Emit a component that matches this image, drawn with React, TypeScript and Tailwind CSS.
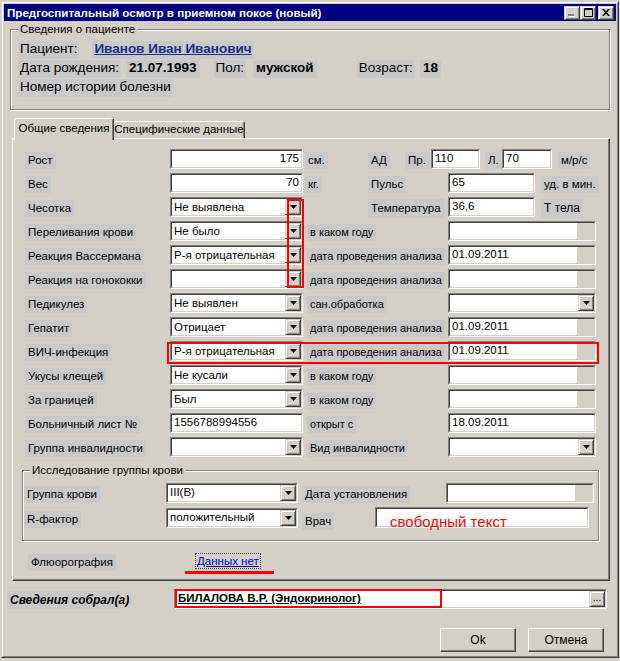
import React from "react";

const LBL =
  "inline-flex items-center h-[17px] px-[3px] bg-[#c9c9c9] leading-none whitespace-nowrap text-black";

function Lbl({
  children,
  className = "",
  size = "text-[11.5px]",
}: {
  children?: React.ReactNode;
  className?: string;
  size?: string;
}) {
  return <span className={`${LBL} ${size} ${className}`}>{children}</span>;
}

function Sunken({
  className = "",
  inner = "bg-white",
  children,
}: {
  className?: string;
  inner?: string;
  children?: React.ReactNode;
}) {
  return (
    <div className={`border border-t-[#808080] border-l-[#808080] border-b-white border-r-white ${className}`}>
      <div
        className={`h-full flex items-center border border-t-[#404040] border-l-[#404040] border-b-[#d4d0c8] border-r-[#d4d0c8] ${inner}`}
      >
        {children}
      </div>
    </div>
  );
}

function Field({
  w,
  value = "",
  right = false,
  tail = false,
}: {
  w: string;
  value?: string;
  right?: boolean;
  tail?: boolean;
}) {
  return (
    <Sunken className={`${w} h-[20px]`}>
      <span className={`flex-1 px-[2px] text-[11.5px] leading-none whitespace-nowrap ${right ? "text-right" : ""}`}>
        {value}
      </span>
      {tail && <span className="w-[17px] h-full bg-[#d4d0c8]" />}
    </Sunken>
  );
}

function RaisedBox({ className = "", children }: { className?: string; children?: React.ReactNode }) {
  return (
    <span
      className={`flex items-center justify-center bg-[#d4d0c8] border border-t-[#d4d0c8] border-l-[#d4d0c8] border-r-[#404040] border-b-[#404040] shadow-[inset_1px_1px_0_white,inset_-1px_-1px_0_#808080] ${className}`}
    >
      {children}
    </span>
  );
}

function DropBtn() {
  return (
    <RaisedBox className="w-[16px] h-[16px] shrink-0">
      <svg width="7" height="4" viewBox="0 0 7 4">
        <path d="M0 0h7L3.5 4z" fill="black" />
      </svg>
    </RaisedBox>
  );
}

function Combo({ w, value = "" }: { w: string; value?: string }) {
  return (
    <Sunken className={`${w} h-[20px]`}>
      <span className="flex-1 px-[2px] pt-[1px] text-[11.5px] leading-none whitespace-nowrap overflow-hidden">{value}</span>
      <DropBtn />
    </Sunken>
  );
}

function Row({ label, control, children }: { label: string; control: React.ReactNode; children?: React.ReactNode }) {
  return (
    <div className="flex items-center h-[24px]">
      <div className="w-[145px]">
        <Lbl>{label}</Lbl>
      </div>
      {control}
      {children}
    </div>
  );
}

function RightField({ label, value = "", tail = true, combo = false }: { label: string; value?: string; tail?: boolean; combo?: boolean }) {
  return (
    <>
      <div className="w-[145px] pl-[4px]">
        <Lbl size="text-[11px]">{label}</Lbl>
      </div>
      {combo ? <Combo w="w-[148px]" /> : <Field w="w-[148px]" value={value} tail={tail} />}
    </>
  );
}

function TitleBtn({ children, className = "" }: { children: React.ReactNode; className?: string }) {
  return <RaisedBox className={`w-[16px] h-[14px] ${className}`}>{children}</RaisedBox>;
}

export default function App() {
  return (
    <div className="relative w-[620px] h-[661px] bg-[#d4d0c8] p-[1px] font-['Liberation_Sans',Arial,sans-serif] text-black overflow-hidden">
      <div className="w-[618px] h-[657px] border border-t-[#d4d0c8] border-l-[#d4d0c8] border-r-[#404040] border-b-[#404040]">
        <div className="h-full border border-t-white border-l-white border-r-[#808080] border-b-[#808080] p-[1px] flex flex-col">
          {/* title bar */}
          <div className="h-[17px] bg-[#000080] flex items-center pl-[3px] pr-[2px]">
            <span className="flex-1 text-white font-bold text-[11.6px] leading-none whitespace-nowrap">
              Предгоспитальный осмотр в приемном покое (новый)
            </span>
            <TitleBtn>
              <svg width="10" height="8" viewBox="0 0 10 8">
                <rect x="1" y="5" width="6" height="2" fill="#808080" />
                <rect x="2" y="7" width="6" height="1" fill="white" />
              </svg>
            </TitleBtn>
            <TitleBtn>
              <svg width="9" height="9" viewBox="0 0 9 9">
                <path d="M0.5 0.5h8v8h-8z" fill="none" stroke="black" />
                <rect x="0" y="1" width="9" height="1" fill="black" />
              </svg>
            </TitleBtn>
            <TitleBtn className="ml-[2px]">
              <svg width="8" height="7" viewBox="0 0 8 7">
                <path d="M0 0h2l2 2.5L6 0h2L5 3.5 8 7H6L4 4.5 2 7H0l3-3.5z" fill="black" />
              </svg>
            </TitleBtn>
          </div>

          {/* patient info */}
          <fieldset className="mt-[1px] mx-[6px] h-[88px] border border-[#808080] shadow-[1px_1px_0_white,inset_1px_1px_0_white]">
            <legend className="ml-[7px] px-[2px] bg-[#d4d0c8] text-[11.5px] leading-[14px]">Сведения о пациенте</legend>
            <div className="pl-[7px] pt-[4px] text-[13.5px] flex flex-col">
              <div className="flex items-center h-[19px]">
                <span className="h-[18px] flex items-center px-[2px] bg-[#c9c9c9]">Пациент:</span>
                <span className="ml-[13px] h-[18px] flex items-center px-[2px] bg-[#c9c9c9] text-[#1c2a8c] font-bold underline">
                  Иванов Иван Иванович
                </span>
              </div>
              <div className="flex items-center h-[19px]">
                <span className="h-[18px] flex items-center px-[2px] bg-[#c9c9c9]">Дата рождения:</span>
                <span className="ml-[5px] h-[18px] flex items-center px-[3px] bg-[#c9c9c9] font-bold">21.07.1993</span>
                <span className="ml-[14px] h-[18px] flex items-center px-[2px] bg-[#c9c9c9]">Пол:</span>
                <span className="ml-[7px] h-[18px] flex items-center px-[3px] bg-[#c9c9c9] font-bold">мужской</span>
                <span className="ml-[40px] h-[18px] flex items-center px-[2px] bg-[#c9c9c9]">Возраст:</span>
                <span className="ml-[5px] h-[18px] flex items-center px-[3px] bg-[#c9c9c9] font-bold">18</span>
              </div>
              <div className="flex items-center h-[19px]">
                <span className="h-[18px] flex items-center px-[2px] bg-[#c9c9c9]">Номер истории болезни</span>
              </div>
            </div>
          </fieldset>

          {/* tabs */}
          <div className="mt-[8px] ml-[10px] flex items-end h-[20px] text-[11.5px] leading-none">
            <div className="relative z-10 w-[100px] h-[22px] -mb-[2px] bg-[#d4d0c8] border-t border-l border-r border-t-white border-l-white border-r-[#404040] rounded-t-[2px] shadow-[inset_-1px_0_0_#808080] flex items-start justify-center pt-[4px]">
              Общие сведения
            </div>
            <div className="w-[131px] h-[17px] bg-[#d4d0c8] border-t border-r border-t-white border-r-[#404040] rounded-t-[2px] shadow-[inset_-1px_0_0_#808080] flex items-center justify-center">
              Специфические данные
            </div>
          </div>

          {/* tab panel */}
          <div className="ml-[8px] w-[598px] h-[443px] border border-t-white border-l-white border-r-[#404040] border-b-[#404040] shadow-[inset_-1px_-1px_0_#808080]">
            <div className="pt-[8px] pl-[12px] flex flex-col">
              <Row label="Рост" control={<Field w="w-[133px]" value="175" right />}>
                <div className="w-[65px] pl-[2px]">
                  <Lbl>см.</Lbl>
                </div>
                <div className="w-[37px]">
                  <Lbl>АД</Lbl>
                </div>
                <div className="w-[26px]">
                  <Lbl>Пр.</Lbl>
                </div>
                <Field w="w-[49px]" value="110" />
                <div className="w-[22px] pl-[5px]">
                  <Lbl>Л.</Lbl>
                </div>
                <Field w="w-[50px]" value="70" />
                <div className="pl-[6px]">
                  <Lbl>м/р/с</Lbl>
                </div>
              </Row>
              <Row label="Вес" control={<Field w="w-[133px]" value="70" right />}>
                <div className="w-[65px] pl-[2px]">
                  <Lbl>кг.</Lbl>
                </div>
                <div className="w-[80px]">
                  <Lbl>Пульс</Lbl>
                </div>
                <Field w="w-[87px]" value="65" />
                <div className="pl-[6px]">
                  <Lbl>уд. в мин.</Lbl>
                </div>
              </Row>
              <Row label="Чесотка" control={<Combo w="w-[133px]" value="Не выявлена" />}>
                <div className="w-[65px]" />
                <div className="w-[80px]">
                  <Lbl className="h-[19px]">Температура</Lbl>
                </div>
                <Field w="w-[87px]" value="36,6" />
                <div className="pl-[6px]">
                  <Lbl className="h-[19px] mt-[4px]" size="text-[12px]">
                    Т тела
                  </Lbl>
                </div>
              </Row>
              <Row label="Переливания крови" control={<Combo w="w-[133px]" value="Не было" />}>
                <RightField label="в каком году" />
              </Row>
              <Row label="Реакция Вассермана" control={<Combo w="w-[133px]" value="Р-я отрицательная" />}>
                <RightField label="дата проведения анализа" value="01.09.2011" />
              </Row>
              <Row label="Реакция на гонококки" control={<Combo w="w-[133px]" />}>
                <RightField label="дата проведения анализа" />
              </Row>
              <Row label="Педикулез" control={<Combo w="w-[133px]" value="Не выявлен" />}>
                <RightField label="сан.обработка" combo />
              </Row>
              <Row label="Гепатит" control={<Combo w="w-[133px]" value="Отрицает" />}>
                <RightField label="дата проведения анализа" value="01.09.2011" />
              </Row>
              <Row label="ВИЧ-инфекция" control={<Combo w="w-[133px]" value="Р-я отрицательная" />}>
                <RightField label="дата проведения анализа" value="01.09.2011" />
              </Row>
              <Row label="Укусы клещей" control={<Combo w="w-[133px]" value="Не кусали" />}>
                <RightField label="в каком году" />
              </Row>
              <Row label="За границей" control={<Combo w="w-[133px]" value="Был" />}>
                <RightField label="в каком году" />
              </Row>
              <Row label="Больничный лист №" control={<Field w="w-[133px]" value="1556788994556" />}>
                <RightField label="открыт с" value="18.09.2011" tail={false} />
              </Row>
              <Row label="Группа инвалидности" control={<Combo w="w-[133px]" />}>
                <RightField label="Вид инвалидности" combo />
              </Row>
            </div>

            {/* blood group */}
            <fieldset className="mt-[4px] ml-[9px] w-[577px] h-[78px] border border-[#808080] shadow-[1px_1px_0_white,inset_1px_1px_0_white]">
              <legend className="ml-[7px] px-[2px] bg-[#d4d0c8] text-[11.5px] leading-[14px]">Исследование группы крови</legend>
              <div className="pt-[3px] pl-[1px] flex flex-col">
                <div className="flex items-center h-[25px]">
                  <div className="w-[142px]">
                    <Lbl className="mt-[4px]">Группа крови</Lbl>
                  </div>
                  <Combo w="w-[132px]" value="III(B)" />
                  <div className="w-[148px] pl-[4px]">
                    <Lbl className="mt-[3px]">Дата установления</Lbl>
                  </div>
                  <Field w="w-[148px]" tail />
                </div>
                <div className="flex items-center h-[25px]">
                  <div className="w-[142px]">
                    <Lbl className="mt-[4px]">R-фактор</Lbl>
                  </div>
                  <Combo w="w-[132px]" value="положительный" />
                  <div className="w-[77px] pl-[4px] self-start pt-[3px]">
                    <Lbl>Врач</Lbl>
                  </div>
                  <Sunken className="w-[214px] h-[21px]" inner="bg-white items-end">
                    <span className="pl-[13px] text-[15px] leading-none text-[#ff0000] whitespace-nowrap translate-y-[3px]">
                      свободный текст
                    </span>
                  </Sunken>
                </div>
              </div>
            </fieldset>

            <div className="mt-[8px] pl-[15px] flex items-center h-[24px]">
              <div className="w-[167px]">
                <Lbl>Флюорография</Lbl>
              </div>
              <span className="px-[1px] border border-dotted border-[#404040] text-[11.5px] leading-[14px] text-[#0000cc] underline">
                Данных нет
              </span>
            </div>
          </div>

          {/* collected by */}
          <div className="mt-[8px] ml-[3px] flex items-center h-[20px]">
            <div className="w-[167px]">
              <span className="inline-flex items-center h-[18px] w-[115px] pl-[3px] bg-[#c9c9c9] text-[12px] font-bold italic whitespace-nowrap">
                Сведения собрал(а)
              </span>
            </div>
            <Sunken className="w-[433px] h-[20px]">
              <span className="flex-1 pl-[2px] text-[11.5px] font-bold underline leading-none whitespace-nowrap">
                БИЛАЛОВА В.Р. (Эндокринолог)
              </span>
              <RaisedBox className="w-[16px] h-[16px] text-[10px] leading-none">
                <span className="-mt-[3px]">...</span>
              </RaisedBox>
            </Sunken>
          </div>

          {/* buttons */}
          <div className="mt-[19px] mr-[12px] flex justify-end gap-[12px]">
            <button className="w-[76px] h-[24px] text-[12px] bg-[#d4d0c8] border border-t-white border-l-white border-r-[#404040] border-b-[#404040] shadow-[inset_-1px_-1px_0_#808080]">
              Ok
            </button>
            <button className="w-[76px] h-[24px] text-[12px] bg-[#d4d0c8] border border-t-white border-l-white border-r-[#404040] border-b-[#404040] shadow-[inset_-1px_-1px_0_#808080]">
              Отмена
            </button>
          </div>
        </div>
      </div>

      {/* red annotation marks */}
      <div className="absolute left-[287px] top-[199px] w-[17px] h-[89px] border-2 border-[#ff0000]" />
      <div className="absolute left-[167px] top-[342px] w-[432px] h-[22px] border-2 border-[#ff0000]" />
      <div className="absolute left-[175px] top-[589px] w-[267px] h-[19px] border-2 border-[#ff0000]" />
      <div className="absolute left-[185px] top-[571px] w-[89px] h-[3px] bg-[#ff0000]" />
    </div>
  );
}
